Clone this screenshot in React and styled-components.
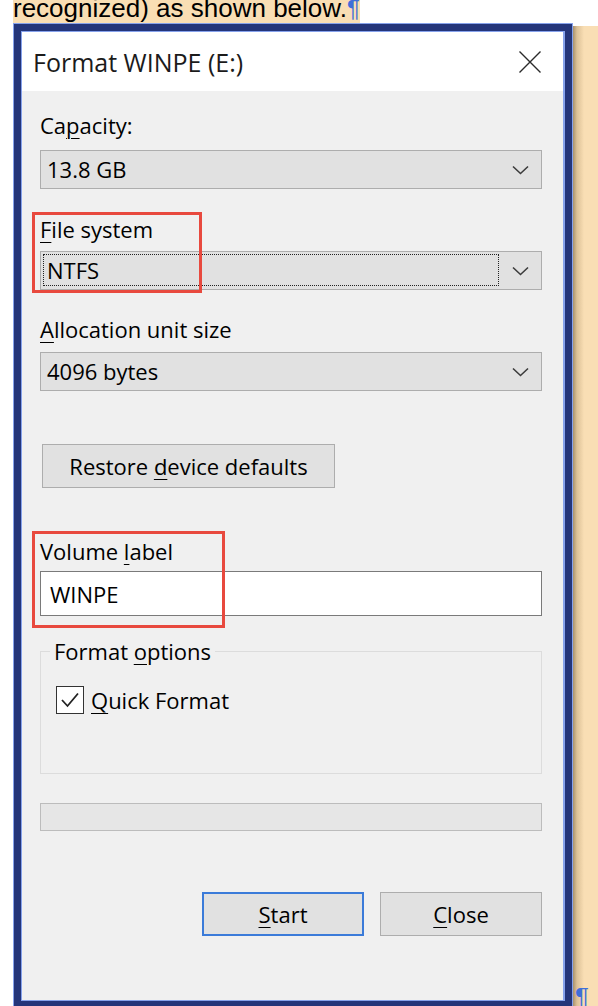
import React from 'react';
import styled, { createGlobalStyle } from 'styled-components';

const GlobalStyle = createGlobalStyle`
  html, body {
    margin: 0;
    padding: 0;
    background: #fff;
    overflow: hidden;
  }
`;

const Page = styled.div`
  position: relative;
  width: 598px;
  height: 1006px;
  overflow: hidden;
  background: #fff;
`;

// строка документа над картинкой
const DocLine = styled.p`
  margin: 0 0 7px;
  padding-left: 13px;
  height: 16px;
  font-family: "Liberation Sans", Arial, sans-serif;
  font-size: 26px;
  line-height: 16px;
  color: #000;
  white-space: nowrap;
`;

const Highlight = styled.span`
  background: #f9deb4;
`;

const Pilcrow = styled.span`
  color: #3f6fd8;
  font-family: "Liberation Sans", Arial, sans-serif;
  font-size: ${p => p.size || 24}px;
`;

const Stage = styled.div`
  display: flex;
  padding-left: 13px;
`;

const Frame = styled.div`
  flex-shrink: 0;
  width: 560px;
  box-sizing: border-box;
  padding: 7px;
  border: 1px solid #86a2ec;
  background: #24357a;
`;

const Strip = styled.div`
  flex: 1;
  margin-top: 3px;
  display: flex;
  flex-direction: column;
  justify-content: flex-end;
  align-items: flex-start;
  padding-left: 2px;
  background: linear-gradient(to right, #a8916c 0px, #dcc197 4px, #f9deb4 11px);
`;

const Window = styled.div`
  height: 970px;
  box-sizing: border-box;
  border: 1px solid #86a2ec;
  border-right-width: 2px;
  display: flex;
  flex-direction: column;
  background: #f0f0f0;
  font-family: "Open Sans", "Noto Sans", sans-serif;
  color: #000;
`;

const TitleBar = styled.div`
  height: 59px;
  flex-shrink: 0;
  display: flex;
  align-items: center;
  justify-content: space-between;
  padding: 0 21px 0 11px;
  background: #fff;
`;

const Title = styled.div`
  font-size: 25px;
  color: #1b1b1b;
`;

const Body = styled.div`
  flex: 1;
  display: flex;
  flex-direction: column;
  padding: 20px 21px 0 18px;
`;

const Label = styled.div`
  margin-top: ${p => p.top || 0}px;
  font-size: 22px;
  line-height: 28px;
`;

const U = styled.span`
  text-decoration: underline;
  text-decoration-thickness: 1px;
  text-underline-offset: 4px;
`;

const Select = styled.div`
  margin-top: ${p => p.top || 0}px;
  height: 39px;
  box-sizing: border-box;
  display: flex;
  border: 1px solid #adadad;
  background: #e1e1e1;
`;

const Value = styled.div`
  flex: 1;
  display: flex;
  align-items: center;
  margin: 2px 0 3px 2px;
  padding-left: 3px;
  border: 1px dotted ${p => (p.focused ? '#222' : 'transparent')};
  font-size: 22px;
`;

const Arrow = styled.div`
  width: 42px;
  display: flex;
  align-items: center;
  justify-content: center;
`;

const Button = styled.div`
  width: ${p => p.width}px;
  height: 44px;
  box-sizing: border-box;
  display: flex;
  align-items: center;
  justify-content: center;
  border: ${p => (p.primary ? '2px solid #3b7bd9' : '1px solid #adadad')};
  background: #e1e1e1;
  font-size: 22px;
`;

const RestoreButton = styled(Button)`
  margin: 53px 0 0 2px;
`;

const TextField = styled.div`
  margin-top: 6px;
  height: 45px;
  box-sizing: border-box;
  display: flex;
  align-items: center;
  padding-left: 9px;
  border: 1px solid #7a7a7a;
  background: #fff;
  font-size: 22px;
`;

const Group = styled.fieldset`
  margin: 21px 0 0;
  min-inline-size: 0;
  padding: 0 0 59px 9px;
  border: 1px solid #dcdcdc;
`;

const Legend = styled.legend`
  padding: 0 4px;
  font-size: 22px;
  line-height: 28px;
`;

const CheckRow = styled.div`
  display: flex;
  align-items: center;
  gap: 7px;
  margin: 21px 0 0 6px;
  font-size: 22px;
  line-height: 28px;
`;

const CheckBox = styled.div`
  width: 28px;
  height: 28px;
  box-sizing: border-box;
  display: flex;
  align-items: center;
  justify-content: center;
  border: 1.5px solid #333;
  background: #fff;
`;

const Progress = styled.div`
  margin-top: 29px;
  height: 28px;
  box-sizing: border-box;
  border: 1px solid #bcbcbc;
  background: #e6e6e6;
`;

const ButtonRow = styled.div`
  margin-top: 61px;
  display: flex;
  justify-content: flex-end;
  gap: 16px;
`;

// красные рамки поверх скриншота
const Marker = styled.div`
  position: absolute;
  left: ${p => p.x}px;
  top: ${p => p.y}px;
  width: ${p => p.w}px;
  height: ${p => p.h}px;
  box-sizing: border-box;
  border: 3px solid #e8493e;
`;

const Chevron = () => (
  <svg width="17" height="10" viewBox="0 0 17 10">
    <polyline points="1,1.5 8.5,8.5 16,1.5" fill="none" stroke="#3c3c3c" strokeWidth="1.6" />
  </svg>
);

const CloseIcon = () => (
  <svg width="24" height="24" viewBox="0 0 24 24">
    <path d="M1.5 1.5 L22.5 22.5 M22.5 1.5 L1.5 22.5" stroke="#2b2b2b" strokeWidth="1.4" />
  </svg>
);

const Check = () => (
  <svg width="22" height="22" viewBox="0 0 22 22">
    <polyline points="3,11 8.5,17 19,4.5" fill="none" stroke="#222" strokeWidth="1.8" />
  </svg>
);

const Dropdown = ({ top, value, focused }) => (
  <Select top={top}>
    <Value focused={focused}>{value}</Value>
    <Arrow><Chevron /></Arrow>
  </Select>
);

export default function App() {
  return (
    <Page>
      <GlobalStyle />
      <DocLine>
        <Highlight>recognized) as shown below.<Pilcrow>¶</Pilcrow></Highlight>
      </DocLine>

      <Stage>
        <Frame>
          <Window>
            <TitleBar>
              <Title>Format WINPE (E:)</Title>
              <CloseIcon />
            </TitleBar>

            <Body>
              <Label>Ca<U>p</U>acity:</Label>
              <Dropdown top={11} value="13.8 GB" />

              <Label top={26}><U>F</U>ile system</Label>
              <Dropdown top={8} value="NTFS" focused />

              <Label top={25}><U>A</U>llocation unit size</Label>
              <Dropdown top={9} value="4096 bytes" />

              <RestoreButton width={293}>Restore&nbsp;<U>d</U>evice defaults</RestoreButton>

              <Label top={49}>Volume <U>l</U>abel</Label>
              <TextField>WINPE</TextField>

              <Group>
                <Legend>Format <U>o</U>ptions</Legend>
                <CheckRow>
                  <CheckBox><Check /></CheckBox>
                  <span><U>Q</U>uick Format</span>
                </CheckRow>
              </Group>

              <Progress />

              <ButtonRow>
                <Button width={162} primary><U>S</U>tart</Button>
                <Button width={162}><U>C</U>lose</Button>
              </ButtonRow>
            </Body>
          </Window>
        </Frame>
        <Strip>
          <Pilcrow size={26} style={{ marginBottom: -4 }}>¶</Pilcrow>
        </Strip>
      </Stage>

      <Marker x={32} y={212} w={170} h={81} />
      <Marker x={32} y={531} w={193} h={97} />
    </Page>
  );
}
